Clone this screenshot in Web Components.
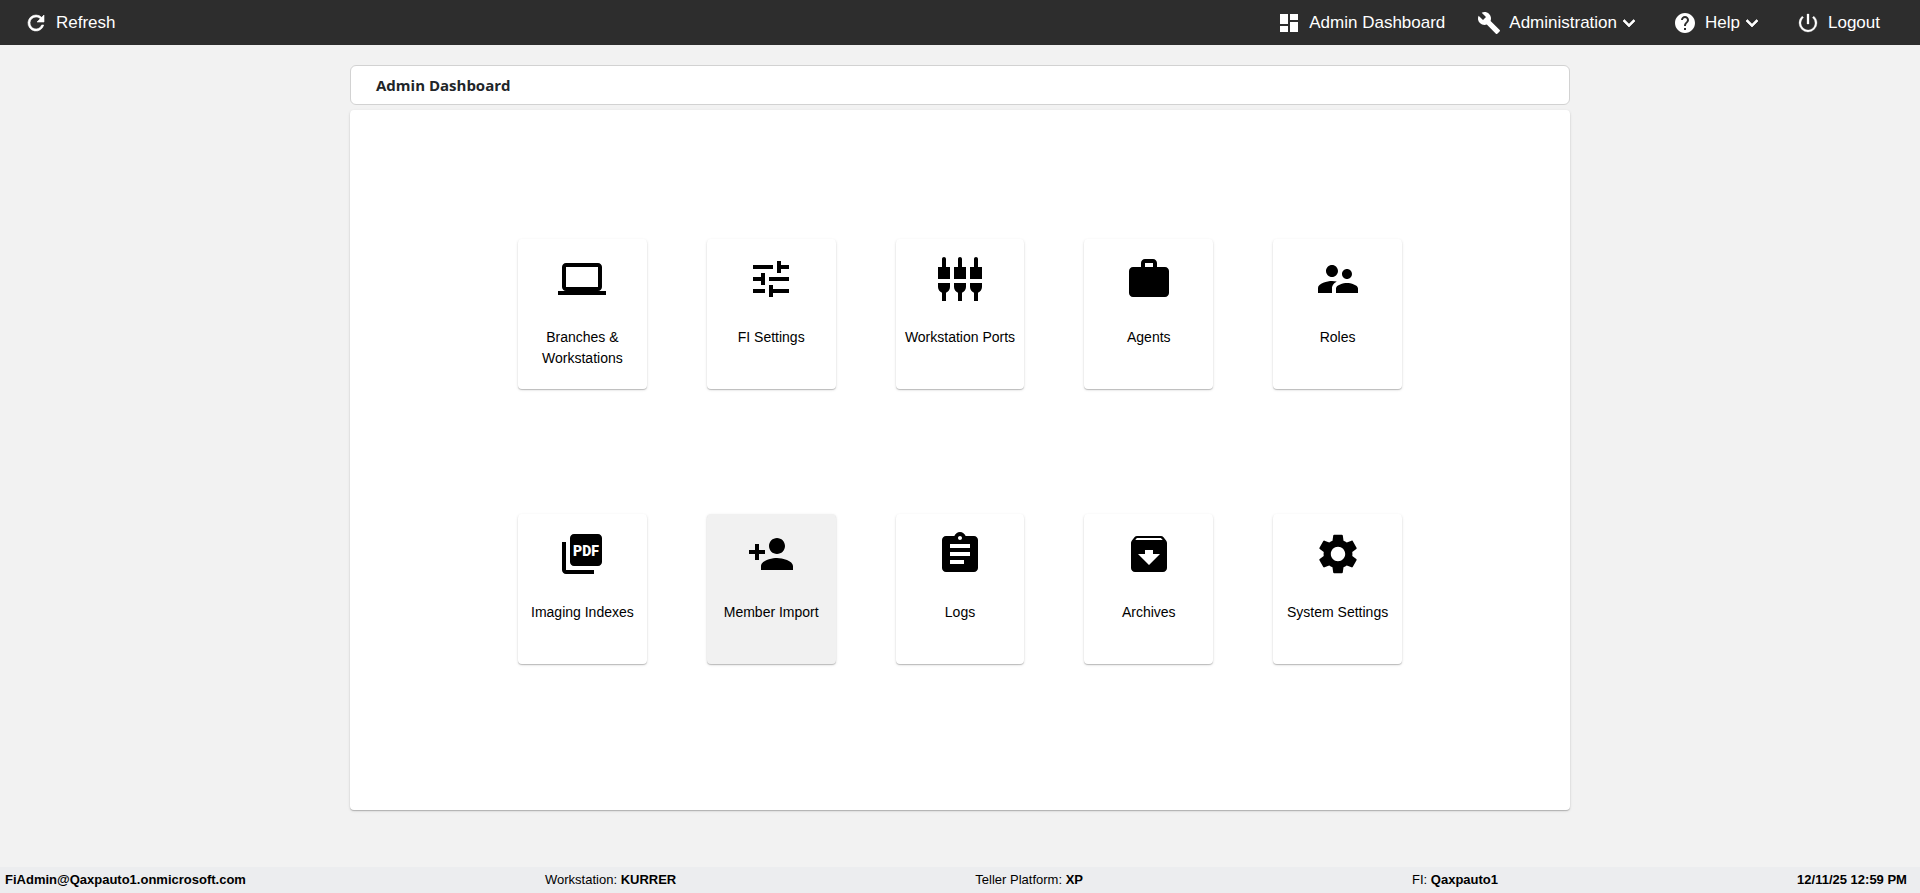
<!DOCTYPE html>
<html lang="en">
<head>
<meta charset="utf-8">
<meta name="viewport" content="width=device-width, initial-scale=1">
<title>Admin Dashboard</title>
<style>
  body { margin: 0; background: #f2f2f2; color: #000; font-family: "Liberation Sans", Arial, sans-serif; }
</style>
</head>
<body>
<admin-page>
  <top-bar slot="header">
    <bar-item icon="refresh" slot="start">Refresh</bar-item>
    <bar-item icon="dashboard" href="#dashboard">Admin Dashboard</bar-item>
    <bar-item icon="build" menu>Administration</bar-item>
    <bar-item icon="help" menu>Help</bar-item>
    <bar-item icon="power">Logout</bar-item>
  </top-bar>
  <page-title>Admin Dashboard</page-title>
  <tile-panel>
    <dash-tile icon="laptop">Branches &amp; Workstations</dash-tile>
    <dash-tile icon="tune">FI Settings</dash-tile>
    <dash-tile icon="ports">Workstation Ports</dash-tile>
    <dash-tile icon="work">Agents</dash-tile>
    <dash-tile icon="people">Roles</dash-tile>
    <dash-tile icon="pdf">Imaging Indexes</dash-tile>
    <dash-tile icon="personAdd" active>Member Import</dash-tile>
    <dash-tile icon="assignment">Logs</dash-tile>
    <dash-tile icon="archive">Archives</dash-tile>
    <dash-tile icon="settings">System Settings</dash-tile>
  </tile-panel>
  <status-bar slot="footer">
    <status-item value="FiAdmin@Qaxpauto1.onmicrosoft.com"></status-item>
    <status-item value="KURRER">Workstation:</status-item>
    <status-item value="XP" trailing>Teller Platform:</status-item>
    <status-item value="Qaxpauto1">FI:</status-item>
    <status-item value="12/11/25 12:59 PM"></status-item>
  </status-bar>
</admin-page>

<script>
const ICONS = {
  refresh: '<path stroke="currentColor" stroke-width=".6" d="M17.65 6.35A7.96 7.96 0 0 0 12 4a8 8 0 1 0 7.73 10h-2.08A6 6 0 1 1 12 6c1.66 0 3.14.69 4.22 1.78L13 11h7V4z"/>',
  dashboard: '<path d="M3 13h8V3H3zm0 8h8v-6H3zm10 0h8V11h-8zm0-18v6h8V3z"/>',
  build: '<path d="M22.7 19l-9.1-9.1c.9-2.3.4-5-1.500-6.900-2-2-5-2.400-7.400-1.300L9 6 6 9 1.600 4.700C.4 7.100.9 10.100 2.900 12.100c1.900 1.900 4.600 2.400 6.900 1.500l9.100 9.100c.4.4 1 .4 1.400 0l2.300-2.300c.5-.4.5-1.100.1-1.400z"/>',
  help: '<path d="M12 2C6.480 2 2 6.480 2 12s4.480 10 10 10 10-4.480 10-10S17.520 2 12 2zm1 17h-2v-2h2zm2.070-7.750l-.9.920C13.450 12.900 13 13.500 13 15h-2v-.5c0-1.100.45-2.100 1.170-2.830l1.240-1.260c.37-.36.59-.86.59-1.410 0-1.100-.9-2-2-2s-2 .9-2 2H8c0-2.210 1.790-4 4-4s4 1.790 4 4c0 .88-.36 1.680-.93 2.250z"/>',
  power: '<path stroke="currentColor" stroke-width=".3" d="M13 3h-2v10h2zm4.830 2.170l-1.420 1.420A6.920 6.920 0 0 1 19 12a7 7 0 1 1-11.420-5.420L6.170 5.170A8.930 8.930 0 0 0 3 12a9 9 0 0 0 18 0c0-2.740-1.230-5.180-3.170-6.830z"/>',
  chevron: '<path stroke="currentColor" stroke-width=".7" d="M16.590 8.590L12 13.170 7.410 8.590 6 10l6 6 6-6z"/>',
  laptop: '<path d="M20 18c1.100 0 1.990-.9 1.990-2L22 6c0-1.100-.9-2-2-2H4c-1.100 0-2 .9-2 2v10c0 1.100.9 2 2 2H0v2h24v-2zM4 6h16v10H4z"/>',
  tune: '<path d="M3 17v2h6v-2zM3 5v2h10V5zm10 16v-2h8v-2h-8v-2h-2v6zM7 9v2H3v2h4v2h2V9zm14 4v-2H11v2zm-6-4h2V7h4V5h-4V3h-2z"/>',
  ports: '<path d="M5 2c0-.55-.45-1-1-1s-1 .45-1 1v4H1v6h6V6H5zm4 14c0 1.300.84 2.400 2 2.820V23h2v-4.180c1.160-.41 2-1.510 2-2.820v-2H9zm-8 0c0 1.300.84 2.400 2 2.820V23h2v-4.180C6.160 18.400 7 17.300 7 16v-2H1zM21 6V2c0-.55-.45-1-1-1s-1 .45-1 1v4h-2v6h6V6zm-8-4c0-.55-.45-1-1-1s-1 .45-1 1v4H9v6h6V6h-2zm4 14c0 1.300.84 2.400 2 2.820V23h2v-4.180c1.160-.41 2-1.510 2-2.820v-2h-6z"/>',
  work: '<path d="M20 6h-4V4c0-1.110-.89-2-2-2h-4c-1.110 0-2 .89-2 2v2H4c-1.110 0-1.990.89-1.990 2L2 19c0 1.110.89 2 2 2h16c1.110 0 2-.89 2-2V8c0-1.110-.89-2-2-2zm-6 0h-4V4h4z"/>',
  people: '<path d="M16.500 12c1.380 0 2.490-1.120 2.490-2.500S17.880 7 16.500 7 14 8.120 14 9.500s1.120 2.500 2.500 2.500zM9 11c1.660 0 2.990-1.340 2.990-3S10.660 5 9 5 6 6.340 6 8s1.340 3 3 3zm7.500 3c-1.830 0-5.500.92-5.500 2.750V19h11v-2.250c0-1.830-3.670-2.750-5.500-2.750zM9 13c-2.330 0-7 1.170-7 3.500V19h7v-2.250c0-.85.33-2.340 2.370-3.470C10.500 13.100 9.660 13 9 13z"/>',
  pdf: '<path d="M20 2H8c-1.100 0-2 .9-2 2v12c0 1.100.9 2 2 2h12c1.100 0 2-.9 2-2V4c0-1.100-.9-2-2-2zM4 6H2v14c0 1.100.9 2 2 2h14v-2H4z"/><text x="14" y="13" text-anchor="middle" fill="#fff" font-family="Roboto, sans-serif" font-weight="900" font-size="7">PDF</text>',
  personAdd: '<path d="M15 12c2.210 0 4-1.790 4-4s-1.790-4-4-4-4 1.790-4 4 1.790 4 4 4zm-9-2V7H4v3H1v2h3v3h2v-3h3v-2zm9 4c-2.670 0-8 1.340-8 4v2h16v-2c0-2.660-5.330-4-8-4z"/>',
  assignment: '<path d="M19 3h-4.180C14.400 1.840 13.300 1 12 1s-2.400.84-2.820 2H5c-1.100 0-2 .9-2 2v14c0 1.100.9 2 2 2h14c1.100 0 2-.9 2-2V5c0-1.100-.9-2-2-2zm-7 0c.55 0 1 .45 1 1s-.45 1-1 1-1-.45-1-1 .45-1 1-1zm2 14H7v-2h7zm3-4H7v-2h10zm0-4H7V7h10z"/>',
  archive: '<path d="M20.540 5.230l-1.390-1.680C18.880 3.210 18.470 3 18 3H6c-.47 0-.88.21-1.160.55L3.460 5.230C3.170 5.570 3 6.020 3 6.500V19c0 1.100.9 2 2 2h14c1.100 0 2-.9 2-2V6.500c0-.48-.17-.93-.46-1.270zM12 17.500L6.500 12H10v-2h4v2h3.500zM5.120 5l.81-1h12l.94 1z"/>',
  settings: '<path d="M19.140 12.940c.04-.3.06-.61.06-.94 0-.32-.02-.64-.07-.94l2.030-1.580c.18-.14.23-.41.12-.61l-1.920-3.320c-.12-.22-.37-.29-.59-.22l-2.390.96c-.5-.38-1.030-.7-1.620-.94l-.36-2.540c-.04-.24-.24-.41-.48-.41h-3.840c-.24 0-.43.17-.47.41l-.36 2.540c-.59.24-1.130.57-1.620.94l-2.390-.96c-.22-.08-.47 0-.59.22L2.740 8.870c-.12.21-.08.47.12.61l2.030 1.580c-.05.3-.09.63-.09.94s.02.64.07.94l-2.030 1.580c-.18.14-.23.41-.12.61l1.920 3.320c.12.22.37.29.59.22l2.390-.96c.5.38 1.030.7 1.620.94l.36 2.540c.05.24.24.41.48.41h3.840c.24 0 .44-.17.47-.41l.36-2.540c.59-.24 1.130-.56 1.620-.94l2.390.96c.22.08.47 0 .59-.22l1.920-3.320c.12-.22.07-.47-.12-.61zM12 15.600c-1.980 0-3.600-1.620-3.600-3.600s1.620-3.600 3.600-3.600 3.600 1.620 3.600 3.600-1.620 3.600-3.600 3.600z"/>'
};
const icon = name => `<svg viewBox="0 0 24 24" fill="currentColor" aria-hidden="true">${ICONS[name]}</svg>`;

function element(name, render) {
  customElements.define(name, class extends HTMLElement {
    constructor() {
      super();
      this.attachShadow({ mode: 'open' }).innerHTML = render(this);
    }
  });
}

element('admin-page', () => `
  <style>
    :host { display: flex; flex-direction: column; min-height: 100vh; }
    main { flex: 1; display: flex; flex-direction: column; gap: 5px; box-sizing: border-box;
           width: 100%; max-width: 1260px; margin: 0 auto; padding: 20px 20px 57px; }
  </style>
  <slot name="header"></slot><main><slot></slot></main><slot name="footer"></slot>`);

element('top-bar', () => `
  <style>
    :host { display: block; background: #2d2d2d; color: #fff; }
    nav { display: flex; justify-content: space-between; align-items: center; min-height: 45px; padding: 0 40px 0 24px; }
    div { display: flex; gap: 32px; }
  </style>
  <nav aria-label="Main"><div><slot name="start"></slot></div><div><slot></slot></div></nav>`);

element('bar-item', host => {
  const tag = host.hasAttribute('href') ? 'a' : 'button';
  const attr = tag === 'a' ? `href="${host.getAttribute('href')}"` : 'type="button"';
  const menu = host.hasAttribute('menu');
  return `
  <style>
    :host { display: block; }
    a, button { display: flex; align-items: center; border: 0; padding: 0; background: none; color: inherit;
                font: inherit; font-size: 17px; line-height: 24px; text-decoration: none; white-space: nowrap; cursor: pointer; }
    svg { width: 24px; height: 24px; flex: none; }
    span { margin-left: 8px; }
  </style>
  <${tag} ${attr}${menu ? ' aria-haspopup="true"' : ''}>${icon(host.getAttribute('icon'))}<span><slot></slot></span>${menu ? icon('chevron') : ''}</${tag}>`;
});

element('page-title', () => `
  <style>
    :host { display: block; background: #fff; border: 1px solid #d2d2d2; border-radius: 6px; }
    h1 { margin: 0; padding: 7px 25px; font: 700 15px/24px "Open Sans", "Segoe UI", sans-serif; color: #212529; }
  </style>
  <h1><slot></slot></h1>`);

element('tile-panel', () => `
  <style>
    :host { flex: 1; display: grid; grid-template-columns: repeat(5, minmax(0, 1fr)); grid-auto-rows: 150px; align-content: start;
            gap: 125px 60px; padding: 129px 168px 60px; background: #fff; border-radius: 4px;
            box-shadow: 0 1px 1px rgba(0,0,0,.2), 0 1px 3px rgba(0,0,0,.12); }
    @media (max-width: 1240px) { :host { grid-template-columns: repeat(auto-fill, 129px); gap: 60px; padding: 60px; justify-content: center; } }
  </style>
  <slot></slot>`);

element('dash-tile', host => `
  <style>
    :host { display: flex; }
    button { flex: 1; display: flex; flex-direction: column; align-items: center; gap: 24px; min-width: 0; padding: 16px 8px;
             border: 0; border-radius: 4px; background: #fff; color: #000; font: inherit; font-size: 14px; line-height: 21px; cursor: pointer;
             box-shadow: 0 1px 1px rgba(0,0,0,.2), 0 1px 3px rgba(0,0,0,.12); }
    button:hover, :host([active]) button { background: #f1f1f1; }
    svg { width: 48px; height: 48px; flex: none; }
  </style>
  <button type="button">${icon(host.getAttribute('icon'))}<span><slot></slot></span></button>`);

element('status-bar', () => `
  <style>
    :host { display: block; background: #ecedef; }
    footer { display: flex; flex-wrap: wrap; justify-content: space-between; padding: 1px 13px 1px 5px; font-size: 13px; line-height: 24px; }
  </style>
  <footer><slot></slot></footer>`);

element('status-item', host => `
  <style>
    :host { display: block; white-space: nowrap; }
    :host([trailing]) { padding-right: 30px; }
  </style>
  <slot></slot> <b>${host.getAttribute('value')}</b>`);
</script>
</body>
</html>
